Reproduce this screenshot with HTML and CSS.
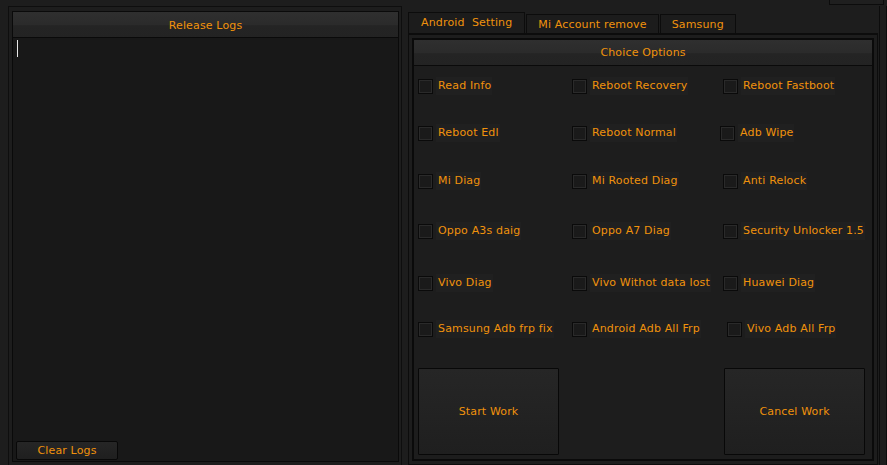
FILE: index.html
```html
<!DOCTYPE html>
<html lang="en">
<head>
    <meta charset="UTF-8">
    <title>Tool</title>
    <link rel="stylesheet" href="styles.css">
</head>
<body>
    <div class="corner-box"></div>
    <div class="app">
        <div class="logs-frame">
            <div class="group logs-group">
                <div class="group-head">Release Logs</div>
                <div class="logs-body">
                    <span class="caret"></span>
                    <button class="btn clear-btn">Clear Logs</button>
                </div>
            </div>
        </div>

        <div class="right-side">
            <div class="tabs">
                <div class="tab active">Android&nbsp; Setting</div>
                <div class="tab">Mi Account remove</div>
                <div class="tab">Samsung</div>
            </div>
            <div class="tab-pane">
                <div class="group options-group">
                    <div class="group-head">Choice Options</div>
                    <div class="options">
                        <div class="opt-row r1">
                            <label class="check"><span class="box"></span><span class="txt">Read Info</span></label>
                            <label class="check"><span class="box"></span><span class="txt">Reboot Recovery</span></label>
                            <label class="check"><span class="box"></span><span class="txt">Reboot Fastboot</span></label>
                        </div>
                        <div class="opt-row r2">
                            <label class="check"><span class="box"></span><span class="txt">Reboot Edl</span></label>
                            <label class="check"><span class="box"></span><span class="txt">Reboot Normal</span></label>
                            <label class="check shift-left"><span class="box"></span><span class="txt">Adb Wipe</span></label>
                        </div>
                        <div class="opt-row r3">
                            <label class="check"><span class="box"></span><span class="txt">Mi Diag</span></label>
                            <label class="check"><span class="box"></span><span class="txt">Mi Rooted Diag</span></label>
                            <label class="check"><span class="box"></span><span class="txt">Anti Relock</span></label>
                        </div>
                        <div class="opt-row r4">
                            <label class="check"><span class="box"></span><span class="txt">Oppo A3s daig</span></label>
                            <label class="check"><span class="box"></span><span class="txt">Oppo A7 Diag</span></label>
                            <label class="check"><span class="box"></span><span class="txt">Security Unlocker 1.5</span></label>
                        </div>
                        <div class="opt-row r5">
                            <label class="check"><span class="box"></span><span class="txt">Vivo Diag</span></label>
                            <label class="check"><span class="box"></span><span class="txt">Vivo Withot data lost</span></label>
                            <label class="check"><span class="box"></span><span class="txt">Huawei Diag</span></label>
                        </div>
                        <div class="opt-row r6">
                            <label class="check"><span class="box"></span><span class="txt">Samsung Adb frp fix</span></label>
                            <label class="check"><span class="box"></span><span class="txt">Android Adb All Frp</span></label>
                            <label class="check shift-right"><span class="box"></span><span class="txt">Vivo Adb All Frp</span></label>
                        </div>
                    </div>
                    <div class="actions">
                        <button class="btn big-btn">Start Work</button>
                        <button class="btn big-btn">Cancel Work</button>
                    </div>
                </div>
            </div>
        </div>
        <div class="side-strip"></div>
    </div>
</body>
</html>
```

FILE: styles.css
```css
body {
    margin: 0;
    background-color: #1d1d1d;
    font-family: "DejaVu Sans", Verdana, sans-serif;
    font-size: 11px;
    letter-spacing: 0.15px;
    color: #f0920c;
    height: 465px;
    overflow: hidden;
    position: relative;
}
.corner-box {
    position: absolute;
    top: -4px;
    right: 3px;
    width: 53px;
    height: 7px;
    border: 1px solid #0c0c0c;
    background-color: #1f1f1f;
}
.app {
    display: flex;
    height: 465px;
    padding: 6px 0 0 8px;
    box-sizing: border-box;
}
.logs-frame {
    width: 397px;
    box-sizing: border-box;
    border: 1px solid #0e0e0e;
    border-bottom: 0;
    padding: 4px 2px 2px 3px;
    display: flex;
}
.group {
    border: 1px solid #0a0a0a;
    display: flex;
    flex-direction: column;
    box-sizing: border-box;
}
.group-head {
    height: 25px;
    line-height: 26px;
    text-align: center;
    background: linear-gradient(#2f2f2f 0, #2b2b2b 50%, #242424 55%, #232323 100%);
    border-bottom: 1px solid #0a0a0a;
}
.logs-group {
    flex: 1;
    margin-bottom: 1px;
}
.logs-group .group-head {
    line-height: 28px;
}
.logs-body {
    flex: 1;
    background-color: #181818;
    position: relative;
    display: flex;
    flex-direction: column;
    justify-content: flex-end;
    padding: 0 0 1px 3px;
}
.caret {
    position: absolute;
    left: 4px;
    top: 2px;
    width: 1px;
    height: 17px;
    background-color: #e8e8e8;
}
.btn {
    font-family: "DejaVu Sans", Verdana, sans-serif;
    font-size: 11px;
    letter-spacing: 0.15px;
    color: #f0920c;
    background: linear-gradient(#262626, #1f1f1f);
    border: 1px solid #080808;
    border-radius: 2px;
    padding: 0;
}
.clear-btn {
    width: 102px;
    height: 19px;
    align-self: flex-start;
}
.right-side {
    margin-left: 6px;
    display: flex;
    flex-direction: column;
    width: 470px;
}
.tabs {
    display: flex;
    align-items: flex-end;
    height: 27px;
}
.tab {
    height: 18px;
    line-height: 19px;
    border: 1px solid #0c0c0c;
    border-bottom: 0;
    background-color: #1c1c1c;
    padding: 0 11px;
    margin-right: 1px;
}
.tab.active {
    height: 20px;
    line-height: 20px;
    padding: 0 12px;
}
.tab-pane {
    flex: 1;
    border: 1px solid #0c0c0c;
    border-top: 2px solid #0c0c0c;
    padding: 3px 7px 3px 3px;
    display: flex;
}
.options-group {
    flex: 1;
    border: 2px solid #0a0a0a;
}
.options {
    padding: 10px 0 0 3px;
    display: flex;
    flex-direction: column;
}
.opt-row {
    display: grid;
    grid-template-columns: 154px 151px 150px;
    align-items: center;
}
.r1 { height: 20px; }
.r2 { height: 20px; margin-top: 27px; }
.r3 { height: 20px; margin-top: 28px; }
.r4 { height: 20px; margin-top: 30px; }
.r5 { height: 20px; margin-top: 32px; }
.r6 { height: 20px; margin-top: 26px; }
.check {
    display: flex;
    align-items: center;
    gap: 3px;
}
.shift-left { margin-left: -3px; }
.shift-right { margin-left: 4px; }
.box {
    width: 13px;
    height: 13px;
    border: 1px solid #0a0a0a;
    outline: 1px solid #2a2a2a;
    outline-offset: -2px;
    background-color: #1a1a1a;
    margin-left: 1px;
}
.txt {
    background-color: #202020;
    padding: 2px 1px 3px 2px;
}
.actions {
    margin-top: auto;
    display: flex;
    justify-content: space-between;
    padding: 0 7px 4px 4px;
}
.big-btn {
    width: 141px;
    height: 87px;
    border-radius: 1px;
}
.side-strip {
    width: 6px;
    margin-left: 1px;
    border-left: 1px solid #0c0c0c;
    border-right: 1px solid #0c0c0c;
}
```
